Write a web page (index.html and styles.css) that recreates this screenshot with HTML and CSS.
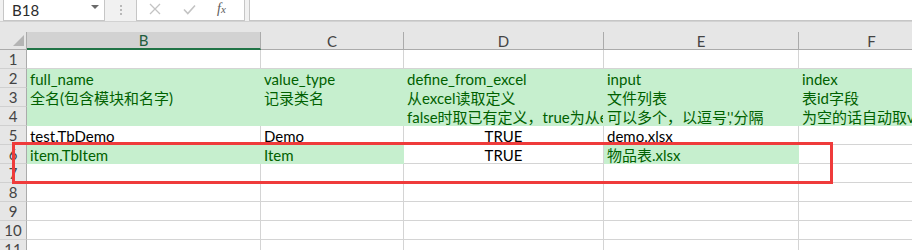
FILE: index.html
```html
<!DOCTYPE html>
<html lang="zh-CN">
<head>
<meta charset="utf-8">
<title>Sheet</title>
<link rel="stylesheet" href="styles.css">
</head>
<body>
<div class="app">
  <div class="fbar">
    <div class="namebox"><span class="nb-text">B18</span><span class="caret"></span></div>
    <div class="split"><span></span><span></span><span></span></div>
    <div class="fxbox">
      <svg class="ico" width="12" height="12" viewBox="0 0 12 12"><path d="M1 1 L11 11 M11 1 L1 11" stroke="#c3c3c3" stroke-width="1.3" fill="none"/></svg>
      <svg class="ico" width="13" height="11" viewBox="0 0 13 11"><path d="M1 5.5 L4.8 9.5 L12 1.5" stroke="#c3c3c3" stroke-width="1.6" fill="none"/></svg>
      <span class="fx"><i>f</i><span class="fx-x">x</span></span>
    </div>
    <div class="finput"></div>
  </div>
  <div class="strip"></div>
  <div class="sheet">
    <div class="grid">
      <div class="corner"><span class="tri"></span></div>
      <div class="ch sel">B</div>
      <div class="ch">C</div>
      <div class="ch">D</div>
      <div class="ch">E</div>
      <div class="ch">F</div>

      <div class="rh">1</div>
      <div class="c"></div><div class="c"></div><div class="c"></div><div class="c"></div><div class="c"></div>

      <div class="rh">2</div>
      <div class="c g">full_name</div>
      <div class="c g">value_type</div>
      <div class="c g">define_from_excel</div>
      <div class="c g">input</div>
      <div class="c g">index</div>

      <div class="rh">3</div>
      <div class="c g">全名(包含模块和名字)</div>
      <div class="c g">记录类名</div>
      <div class="c g">从excel读取定义</div>
      <div class="c g">文件列表</div>
      <div class="c g">表id字段</div>

      <div class="rh">4</div>
      <div class="c g"></div>
      <div class="c g"></div>
      <div class="c g">false时取已有定义，true为从excel读取定义</div>
      <div class="c g">可以多个，以逗号','分隔</div>
      <div class="c g">为空的话自动取value_type的第一个字段</div>

      <div class="rh">5</div>
      <div class="c">test.TbDemo</div>
      <div class="c">Demo</div>
      <div class="c ctr">TRUE</div>
      <div class="c">demo.xlsx</div>
      <div class="c"></div>

      <div class="rh">6</div>
      <div class="c g">item.TbItem</div>
      <div class="c g">Item</div>
      <div class="c ctr">TRUE</div>
      <div class="c g">物品表.xlsx</div>
      <div class="c"></div>

      <div class="rh">7</div>
      <div class="c"></div><div class="c"></div><div class="c"></div><div class="c"></div><div class="c"></div>
      <div class="rh">8</div>
      <div class="c"></div><div class="c"></div><div class="c"></div><div class="c"></div><div class="c"></div>
      <div class="rh">9</div>
      <div class="c"></div><div class="c"></div><div class="c"></div><div class="c"></div><div class="c"></div>
      <div class="rh">10</div>
      <div class="c"></div><div class="c"></div><div class="c"></div><div class="c"></div><div class="c"></div>
      <div class="rh">11</div>
      <div class="c"></div><div class="c"></div><div class="c"></div><div class="c"></div><div class="c"></div>
    </div>
    <div class="mark"></div>
  </div>
</div>
</body>
</html>
```

FILE: styles.css
```css
* { box-sizing: border-box; }
html, body { margin: 0; padding: 0; background: #fff; }
body {
  font-family: Lato, "Noto Sans CJK SC", sans-serif;
  font-size: 15px;
  color: #000;
}
.app {
  width: 912px;
  height: 250px;
  overflow: hidden;
}

/* formula bar */
.fbar {
  display: flex;
  height: 22px;
  background: #f1f1f1;
  border-bottom: 1px solid #d2d2d2;
  padding-left: 3px;
}
.namebox {
  width: 102px;
  height: 21px;
  background: #fff;
  border: 1px solid #c6c6c6;
  border-top: none;
  display: flex;
  align-items: center;
  justify-content: space-between;
  padding: 0 5px 1px 8px;
}
.nb-text { color: #2b2b2b; font-size: 15px; line-height: 18px; }
.caret {
  width: 0; height: 0;
  border-left: 4px solid transparent;
  border-right: 4px solid transparent;
  border-top: 4px solid #6a6a6a;
  margin-bottom: 6px;
}
.split {
  width: 31px;
  display: flex;
  flex-direction: column;
  align-items: center;
  justify-content: center;
  gap: 2px;
  padding-bottom: 2px;
}
.split span {
  width: 2px; height: 2px;
  background: #b9b9b9;
}
.fxbox {
  width: 109px;
  height: 21px;
  background: #fff;
  border: 1px solid #c6c6c6;
  border-top: none;
  display: flex;
  align-items: center;
  padding: 0 0 2px 12px;
}
.ico { display: block; margin-right: 22px; }
.fx {
  font-family: "Liberation Serif", serif;
  color: #5b5b5b;
  font-size: 14px;
  line-height: 14px;
  margin-left: -1px;
}
.fx i { font-style: italic; }
.fx-x { font-style: italic; font-size: 11px; }
.finput {
  flex: 1;
  height: 21px;
  margin-left: 4px;
  background: #fff;
  border: 1px solid #c6c6c6;
  border-top: none;
  border-right: none;
}

.strip {
  height: 10px;
  background: #e6e6e6;
}

/* sheet */
.sheet { position: relative; }
.grid {
  display: grid;
  width: 945px;
  grid-template-columns: 27px 234px 143px 200px 195px 146px;
  grid-template-rows: 18px;
  grid-auto-rows: 19px;
}
.corner {
  position: relative;
  background: #e6e6e6;
  border-right: 1px solid #ababab;
  border-bottom: 1px solid #ababab;
}
.tri {
  position: absolute;
  right: 2px;
  bottom: 3px;
  width: 0; height: 0;
  border-left: 11px solid transparent;
  border-bottom: 11px solid #b4b4b4;
}
.ch {
  background: #e6e6e6;
  border-right: 1px solid #ababab;
  border-bottom: 1px solid #ababab;
  color: #444;
  text-align: center;
  line-height: 18px;
  font-size: 15px;
}
.ch.sel {
  background: #d2d2d2;
  color: #215d3e;
  border-bottom: 2px solid #217346;
  line-height: 17px;
}
.rh {
  background: #e6e6e6;
  border-right: 1px solid #ababab;
  border-bottom: 1px solid #d0d0d0;
  color: #444;
  text-align: center;
  line-height: 19px;
  font-size: 15px;
}
.c {
  border-right: 1px solid #d4d4d4;
  border-bottom: 1px solid #d4d4d4;
  padding: 1px 0 0 3px;
  line-height: 19px;
  white-space: nowrap;
  overflow-x: clip;
  overflow-y: visible;
}
.c.g {
  background: #c6efce;
  border-color: #c6efce;
  color: #006100;
}
.c.ctr {
  text-align: center;
  padding-left: 0;
}

.mark {
  position: absolute;
  left: 12px;
  top: 110px;
  width: 821px;
  height: 42px;
  border: 3px solid #ef3b3b;
}
```
